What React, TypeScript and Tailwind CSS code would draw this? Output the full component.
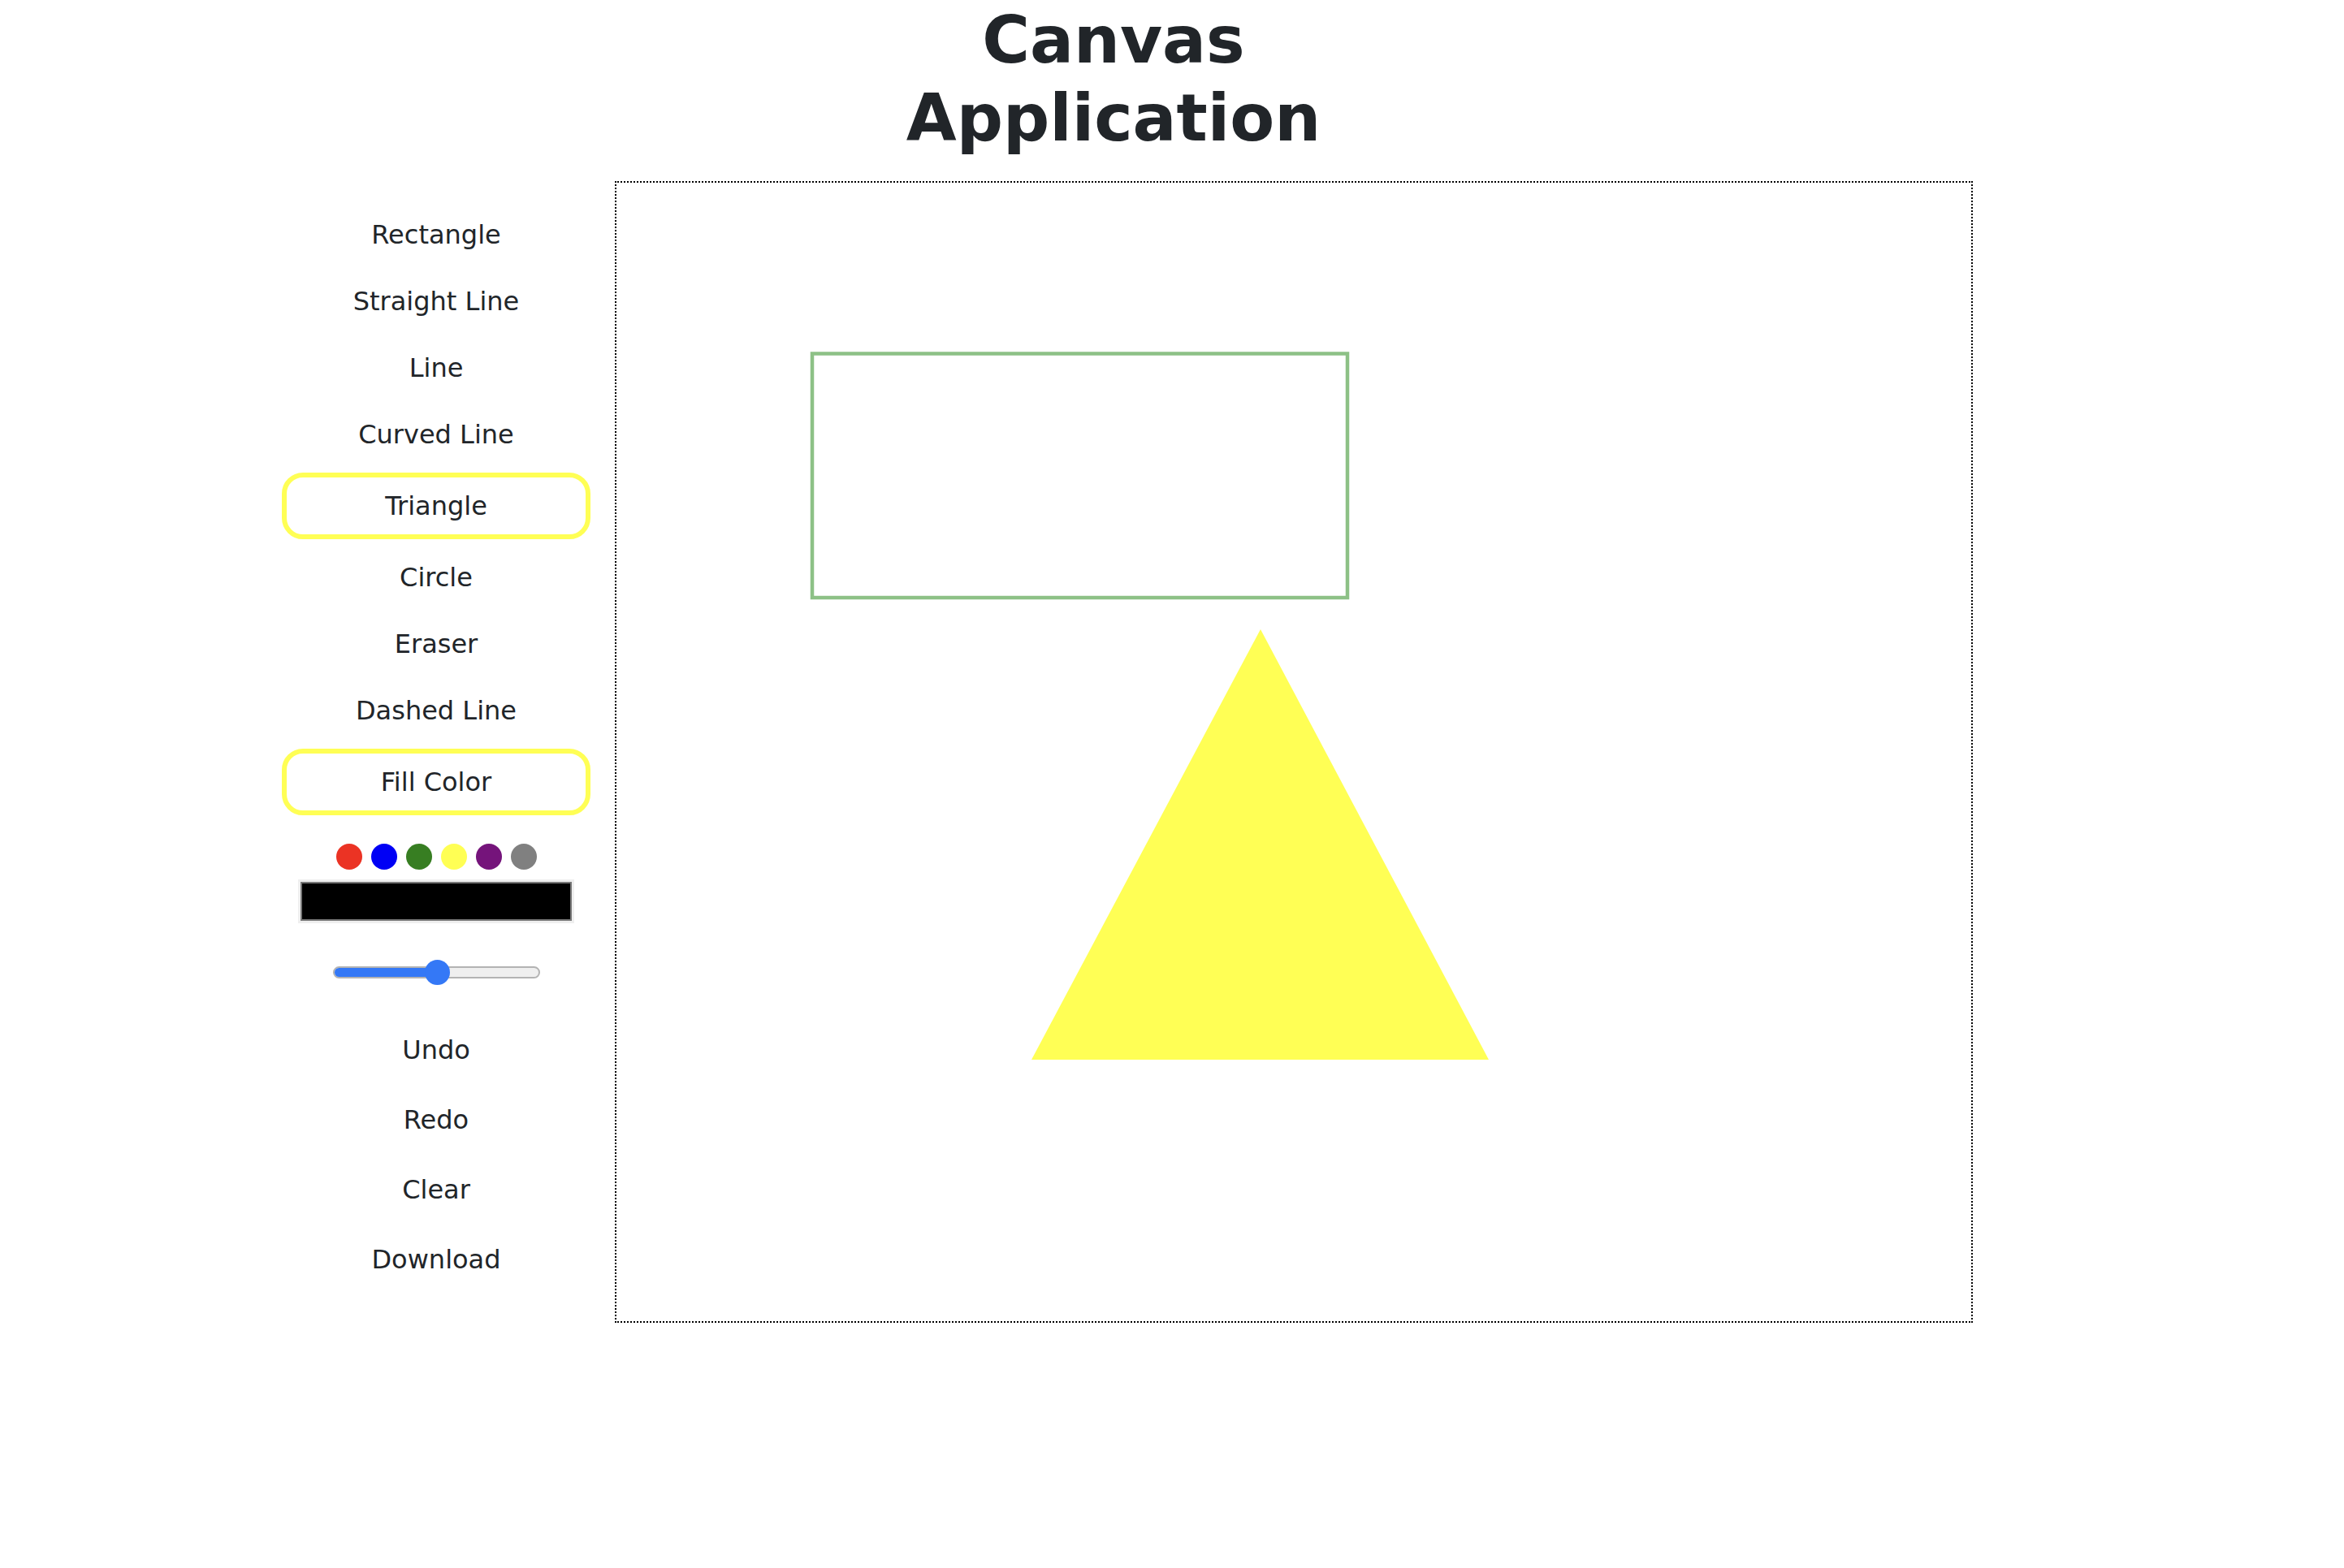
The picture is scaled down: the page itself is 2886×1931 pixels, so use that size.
import clsx from "clsx";

const tools = [
  "Rectangle",
  "Straight Line",
  "Line",
  "Curved Line",
  "Triangle",
  "Circle",
  "Eraser",
  "Dashed Line",
  "Fill Color",
];

// tools that show the yellow outline
const active = ["Triangle", "Fill Color"];

const swatches = ["#eb3324", "#0000f5", "#377e22", "#ffff54", "#75147b", "#808080"];

const actions = ["Undo", "Redo", "Clear", "Download"];

function ToolButton({ label, selected }: { label: string; selected?: boolean }) {
  return (
    <button
      className={clsx(
        "w-full rounded-[26px] py-[11px] text-center text-[32px] leading-[48px] text-[#212529]",
        selected && "border-[6px] border-[#ffff55]"
      )}
    >
      {label}
    </button>
  );
}

function Slider() {
  return (
    <div className="relative flex h-[31px] w-[255px] items-center">
      <div className="flex h-[15px] w-full overflow-hidden rounded-full border-2 border-[#b3b3b3] bg-[#efefef]">
        <div className="h-full w-1/2 bg-[#3478f6]" />
      </div>
      <div className="absolute left-[113px] top-0 h-[31px] w-[31px] rounded-full bg-[#3478f6]" />
    </div>
  );
}

export default function App() {
  return (
    <div className="min-h-screen bg-white font-['DejaVu_Sans',sans-serif] text-[#212529]">
      {/* Title */}
      <div className="flex justify-center pt-[2px]">
        <h1 className="mr-[144px] w-[600px] text-center text-[80px] font-bold leading-[96px]">
          Canvas Application
        </h1>
      </div>

      <div className="mt-[29px] flex items-start gap-[30px] pl-[347px]">
        {/* Toolbar */}
        <aside className="flex w-[380px] flex-col items-center pt-[31px]">
          <div className="flex w-full flex-col gap-[12px]">
            {tools.map((t) => (
              <ToolButton key={t} label={t} selected={active.includes(t)} />
            ))}
          </div>

          <div className="mt-[35px] flex gap-[11px]">
            {swatches.map((c) => (
              <span
                key={c}
                className="h-[32px] w-[32px] rounded-full"
                style={{ backgroundColor: c }}
              />
            ))}
          </div>

          <div className="mt-[12px] h-[54px] w-[340px] bg-[#efefef] p-[3px]">
            <div className="h-full w-full border-2 border-[#777777] bg-black" />
          </div>

          <div className="mt-[45px]">
            <Slider />
          </div>

          <div className="mt-[45px] flex w-full flex-col gap-[16px]">
            {actions.map((a) => (
              <ToolButton key={a} label={a} />
            ))}
          </div>
        </aside>

        {/* Drawing surface */}
        <div className="h-[1406px] w-[1672px] border-2 border-dotted border-black bg-white">
          <svg className="block h-full w-full" viewBox="0 0 1668 1402">
            <rect x="241" y="210.5" width="659" height="300.5" fill="none" stroke="#8dc186" strokeWidth="4.5" />
            <polygon points="793,550 511,1080 1074,1080" fill="#ffff55" />
          </svg>
        </div>
      </div>
    </div>
  );
}
